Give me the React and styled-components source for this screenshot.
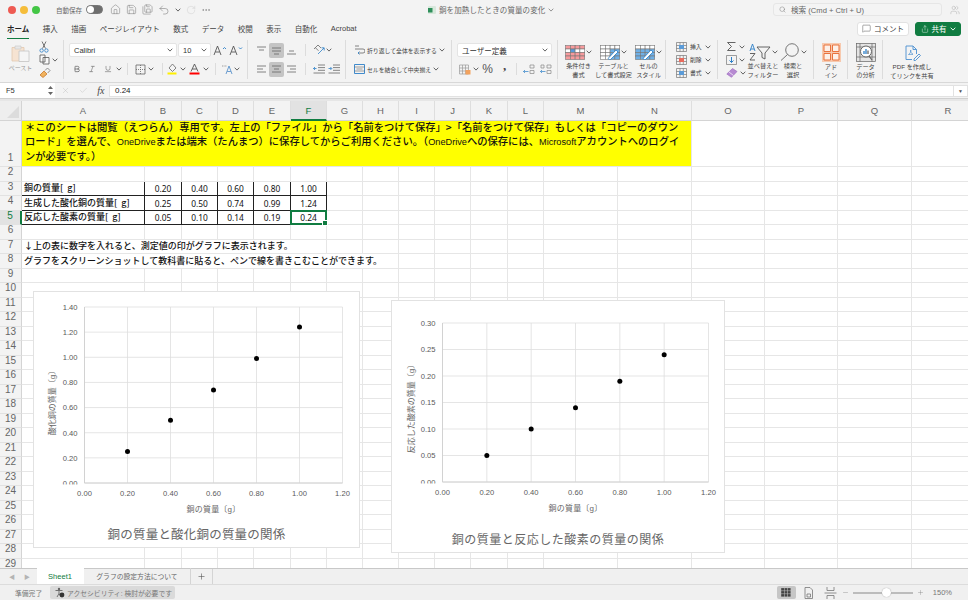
import React from 'react'
import styled, { createGlobalStyle } from 'styled-components'
import { Home, Save, SaveAll, Undo2, RotateCw, MoreHorizontal, Search, X, Check, Plus, Minus, Users, MessageSquare, Share, Bold, Italic, Underline } from 'lucide-react'

const Global = createGlobalStyle`
	html, body { margin: 0; padding: 0; background: #f3f3f3; }
	* { box-sizing: border-box; }
	body { font-family: "Liberation Sans", "Noto Sans CJK JP", sans-serif; color: #444; overflow: hidden; }
`

const Window = styled.div`
	width: 968px;
	height: 600px;
	display: flex;
	flex-direction: column;
	overflow: hidden;
	background: #f3f3f3;
`

/* title bar */
const TitleBar = styled.header`
	height: 19px;
	flex: none;
	display: flex;
	align-items: center;
`
const Lights = styled.div`
	display: flex;
	gap: 4px;
	padding-left: 8px;
	width: 56px;
`
const Light = styled.span`
	width: 8px;
	height: 8px;
	border-radius: 50%;
	background: ${(p) => p.$c};
`
const AutoSave = styled.span`
	font-size: 6.5px;
	color: #666;
	width: 30px;
	white-space: nowrap;
`
const Toggle = styled.span`
	width: 17px;
	height: 9px;
	border-radius: 5px;
	background: #6e6e6e;
	border: 1px solid #777;
	display: block;
	&::before {
		content: '';
		display: block;
		width: 7px;
		height: 7px;
		border-radius: 50%;
		background: #fff;
	}
`
const QuickTools = styled.div`
	display: flex;
	align-items: center;
	gap: 5px;
	padding-left: 7px;
	color: #777;
	width: 325px;
`
const DocTitle = styled.div`
	display: flex;
	align-items: center;
	gap: 3px;
	font-size: 7.5px;
	color: #666;
	width: 345px;
	white-space: nowrap;
	letter-spacing: 0.1px;
`
const SearchBox = styled.div`
	width: 169px;
	height: 13px;
	border: 1px solid #e6e6e6;
	border-radius: 3px;
	display: flex;
	align-items: center;
	gap: 5px;
	padding-left: 5px;
	font-size: 7.6px;
	color: #666;
	background: #f4f4f4;
`
const PeopleSlot = styled.div`
	margin-left: 8px;
	color: #aaa;
	display: flex;
`

/* tab row */
const TabBar = styled.nav`
	height: 19px;
	flex: none;
	display: flex;
	align-items: center;
	padding-left: 7px;
	gap: 13.5px;
	font-size: 7.5px;
	word-spacing: -2px;
	position: relative;
`
const Tab = styled.span`
	position: relative;
	color: ${(p) => (p.$active ? '#222' : '#444')};
	font-weight: ${(p) => (p.$active ? 700 : 400)};
	white-space: nowrap;
	&::after {
		content: '';
		display: ${(p) => (p.$active ? 'block' : 'none')};
		position: absolute;
		left: 0;
		right: 0;
		bottom: -5px;
		height: 1.5px;
		background: #107c41;
	}
`
const TabActions = styled.div`
	margin-left: auto;
	display: flex;
	gap: 6px;
	padding-right: 7px;
`
const CommentButton = styled.button`
	width: 52px;
	height: 14px;
	border: 1px solid #e2e2e2;
	border-radius: 3px;
	background: #fff;
	font: inherit;
	font-size: 7.5px;
	color: #444;
	padding: 0;
	display: flex;
	align-items: center;
	justify-content: center;
	gap: 3px;
`
const ShareButton = styled(CommentButton)`
	width: 46px;
	background: #107c41;
	border-color: #107c41;
	color: #fff;
`

/* ribbon */
const Ribbon = styled.section`
	height: 45px;
	flex: none;
	display: flex;
	border-bottom: 1px solid #d8d8d8;
	padding-top: 2px;
	padding-bottom: 2px;
`
const Group = styled.div`
	width: ${(p) => p.$w}px;
	flex: none;
	display: flex;
	flex-direction: ${(p) => (p.$row ? 'row' : 'column')};
	justify-content: ${(p) => (p.$row ? 'flex-start' : 'space-between')};
	padding-top: ${(p) => (p.$row || p.$tight ? 0 : 3)}px;
	padding-bottom: ${(p) => (p.$row || p.$tight ? 0 : 3)}px;
	padding-left: ${(p) => p.$pad || 0}px;
	border-right: ${(p) => (p.$last ? 'none' : '1px solid #dcdcdc')};
	margin-bottom: ${(p) => (p.$last ? 0 : 1)}px;
`
const ToolRow = styled.div`
	display: flex;
	align-items: center;
	height: 14px;
	gap: ${(p) => p.$gap || 0}px;
`
const Tool = styled.span`
	width: ${(p) => p.$w || 15}px;
	height: 15px;
	flex: none;
	display: flex;
	align-items: center;
	justify-content: center;
	color: #555;
	border-radius: 2px;
	background: ${(p) => (p.$on ? '#c4c4c4' : 'transparent')};
`
const VLine = styled.span`
	width: 1px;
	height: 12px;
	background: #dcdcdc;
	flex: none;
	margin-left: ${(p) => p.$l}px;
	margin-right: ${(p) => p.$r}px;
`
const Field = styled.div`
	width: ${(p) => p.$w}px;
	height: 14px;
	flex: none;
	background: #fff;
	border: 1px solid #e4e4e4;
	border-radius: 2px;
	display: flex;
	align-items: center;
	justify-content: space-between;
	padding: 0 3px 0 4px;
	font-size: 7.5px;
	color: #333;
	margin-right: ${(p) => p.$mr || 0}px;
`
const SmallLabel = styled.span`
	font-size: 5.85px;
	color: #444;
	white-space: nowrap;
	margin: 0 ${(p) => p.$m || 2}px;
`
const BigTool = styled.div`
	width: ${(p) => p.$w}px;
	flex: none;
	display: flex;
	flex-direction: column;
	align-items: center;
`
const BigIcon = styled.div`
	height: 23px;
	display: flex;
	align-items: center;
	gap: 1px;
	padding-top: 3px;
`
const BigText = styled.div`
	font-size: 6.2px;
	line-height: 8.5px;
	text-align: center;
	white-space: nowrap;
	color: #444;
	padding-top: 0.5px;
`
const PasteLabel = styled.div`
	font-size: 6px;
	color: #999;
	text-align: center;
	width: 24px;
`

/* formula bar */
const FormulaBar = styled.div`
	height: 16px;
	flex: none;
	display: flex;
	align-items: center;
	background: #f3f3f3;
	border-bottom: 1px solid #d0d0d0;
`
const NameBox = styled.div`
	width: 55px;
	height: 15px;
	background: #fff;
	font-size: 7.5px;
	color: #333;
	display: flex;
	align-items: center;
	justify-content: space-between;
	padding: 0 2px 0 6px;
`
const FormulaTools = styled.div`
	width: 54px;
	display: flex;
	align-items: center;
	justify-content: space-around;
	color: #bbb;
	padding-left: 2px;
`
const Fx = styled.i`
	font-family: "Liberation Serif", serif;
	font-size: 10px;
	color: #444;
`
const FormulaInput = styled.div`
	flex: 1;
	height: 12px;
	background: #fff;
	border: 1px solid #e2e2e2;
	font-size: 8px;
	color: #222;
	display: flex;
	align-items: center;
	padding-left: 5px;
`
const FormulaDrop = styled.span`
	margin-left: auto;
	width: 14px;
	height: 100%;
	border-left: 1px solid #e2e2e2;
	display: flex;
	align-items: center;
	justify-content: center;
	font-size: 5px;
	color: #555;
`

/* sheet */
const SheetArea = styled.div`
	flex: 1;
	position: relative;
	overflow: hidden;
	background: #fff;
	border-top: 2px solid #e6e6e6;
`
const SheetGrid = styled.div`
	display: grid;
	grid-template-columns: 22px 123px 37px 36px 36px 37px 36px 36px 36px 36px 36px 37px 36px 74px 74px 73px 73px 74px 73px;
	grid-template-rows: 20px 46px repeat(28, 14.5px);
`
const Corner = styled.div`
	background: #eeeeee;
	border-right: 1px solid #d4d4d4;
	border-bottom: 1px solid #d4d4d4;
	position: relative;
	&::after {
		content: '';
		position: absolute;
		right: 2px;
		bottom: 2px;
		border-style: solid;
		border-width: 0 0 12px 12px;
		border-color: transparent transparent #dcdcdc transparent;
	}
`
const ColHead = styled.div`
	background: ${(p) => (p.$on ? '#e2e2e2' : '#f3f3f3')};
	border-right: 1px solid #dedede;
	border-bottom: ${(p) => (p.$on ? '2px solid #107c41' : '1px solid #d4d4d4')};
	color: ${(p) => (p.$on ? '#107c41' : '#666')};
	font-size: 9.5px;
	display: flex;
	align-items: center;
	justify-content: center;
`
const RowHead = styled.div`
	background: ${(p) => (p.$on ? '#e2e2e2' : '#f3f3f3')};
	border-right: ${(p) => (p.$on ? '2px solid #107c41' : '1px solid #d4d4d4')};
	border-bottom: 1px solid #e2e2e2;
	color: ${(p) => (p.$on ? '#107c41' : '#666')};
	font-size: 10px;
	line-height: 10px;
	display: flex;
	align-items: ${(p) => (p.$bottom ? 'flex-end' : 'flex-start')};
	padding-bottom: ${(p) => (p.$bottom ? 3 : 0)}px;
	justify-content: center;
	overflow: hidden;
`
const Cell = styled.div`
	grid-column: span ${(p) => p.$span || 1};
	background: ${(p) => p.$bg || 'transparent'};
	border-right: 1px solid ${(p) => (p.$line ? '#222' : '#e6e6e6')};
	border-bottom: 1px solid ${(p) => (p.$line ? '#222' : '#e6e6e6')};
	font-family: "Noto Sans CJK JP", sans-serif;
	font-size: 9px;
	font-weight: 500;
	line-height: 12px;
	color: #111;
	white-space: pre;
	overflow: hidden;
	padding-left: 2px;
	padding-bottom: 1px;
	display: flex;
	align-items: flex-end;
`
const NumCell = styled(Cell)`
	font-family: "Noto Sans", sans-serif;
	font-size: 8.4px;
	font-weight: 400;
	line-height: 13px;
	justify-content: center;
	padding-left: 0;
	padding-bottom: 0;
	position: relative;
	overflow: visible;
`
const Notice = styled(Cell)`
	font-size: 10.3px;
	line-height: 14.3px;
	padding: 0 0 1px 3px;
	border-color: #e6e6e6;
	align-items: flex-start;
	color: #111;
	white-space: nowrap;
	overflow: visible;
	& > span {
		margin-top: -1.5px;
	}
`
const Latin = styled.span`
	font-family: "Liberation Sans", sans-serif;
	font-size: 9.2px;
`
const Selection = styled.span`
	position: absolute;
	inset: -1px -1px -1px -1px;
	border: 2px solid #107c41;
	pointer-events: none;
	&::after {
		content: '';
		position: absolute;
		right: -3px;
		bottom: -3px;
		width: 4px;
		height: 4px;
		background: #107c41;
		border: 1px solid #fff;
	}
`
const ChartFrame = styled.figure`
	position: absolute;
	margin: 0;
	left: ${(p) => p.$x}px;
	top: ${(p) => p.$y}px;
	width: ${(p) => p.$w}px;
	height: ${(p) => p.$h}px;
	background: #fff;
	border: 1px solid #e2e2e2;
	svg { display: block; }
`

/* sheet tabs */
const SheetTabs = styled.div`
	height: 16px;
	flex: none;
	display: flex;
	align-items: stretch;
	background: #f0f0f0;
	border-top: 1px solid #c8c8c8;
	font-size: 7.5px;
	color: #666;
	position: relative;
`
const TabArrows = styled.div`
	width: 37px;
	display: flex;
	align-items: center;
	gap: 9px;
	padding-left: 9px;
	color: #b4b4b4;
	font-size: 6px;
`
const SheetTab = styled.div`
	width: ${(p) => p.$w}px;
	display: flex;
	align-items: center;
	justify-content: center;
	background: ${(p) => (p.$on ? '#fff' : 'transparent')};
	color: ${(p) => (p.$on ? '#107c41' : '#666')};
	font-size: ${(p) => p.$size || 7.5}px;
	border-right: 1px solid ${(p) => (p.$on ? 'transparent' : '#d4d4d4')};
	white-space: nowrap;
	margin-top: -1px;
`
const AddTab = styled.div`
	width: 22px;
	display: flex;
	align-items: center;
	justify-content: center;
	border-right: 1px solid #d4d4d4;
	color: #555;
`

/* status bar */
const StatusBar = styled.footer`
	height: 16px;
	flex: none;
	display: flex;
	align-items: center;
	background: #f0f0f0;
	border-top: 1px solid #dcdcdc;
	font-size: 6.8px;
	color: #777;
`
const Ready = styled.span`
	padding-left: 15px;
	width: 50px;
	white-space: nowrap;
`
const A11y = styled.span`
	width: 125px;
	height: 13px;
	background: #dadada;
	border-radius: 2px;
	display: flex;
	align-items: center;
	gap: 2px;
	padding-left: 5px;
	white-space: nowrap;
`
const ViewTools = styled.div`
	margin-left: auto;
	display: flex;
	align-items: center;
	color: #777;
	padding-right: 16px;
`
const ViewButton = styled.span`
	width: 19px;
	height: 13px;
	margin-right: ${(p) => p.$mr || 0}px;
	background: ${(p) => (p.$on ? '#c6c6c6' : 'transparent')};
	border-radius: 2px;
	display: flex;
	align-items: center;
	justify-content: center;
`
const Slider = styled.span`
	width: 60px;
	height: 2px;
	background: #bcbcbc;
	margin: 0 4px;
	position: relative;
	&::after {
		content: '';
		position: absolute;
		left: 29px;
		top: -4px;
		width: 9px;
		height: 9px;
		border-radius: 50%;
		background: #fff;
		box-shadow: 0 0 1px #888;
	}
`
const Zoom = styled.span`
	font-size: 7.5px;
	margin-left: 9px;
`

const Chev = ({ c = '#555' }) => (
	<svg width="6" height="4" viewBox="0 0 6 4" fill="none" stroke={c} strokeWidth="0.9">
		<path d="M0.7 0.7 3 3.1 5.3 0.7" />
	</svg>
)

const Glyph = ({ w = 12, h = 12, children, stroke = '#555' }) => (
	<svg width={w} height={h} viewBox={`0 0 ${w} ${h}`} fill="none" stroke={stroke} strokeWidth="0.8">
		{children}
	</svg>
)

const Lines = ({ rows }) => (
	<Glyph w={11} h={11} stroke="#666">
		{rows.map(([y, x1, x2]) => (
			<path key={y} d={`M${x1} ${y}H${x2}`} />
		))}
	</Glyph>
)

const PasteIcon = () => (
	<svg width="19" height="17" viewBox="0 0 19 17" fill="none">
		<path d="M1 2.5h12v13.5H1z" fill="#f6e3d2" stroke="#e2c8ae" strokeWidth="0.8" />
		<path d="M4 1h6v3H4z" fill="#e8e8e8" stroke="#ccc" strokeWidth="0.7" />
		<path d="M8 6h10v10.5H8z" fill="#f5f5f5" stroke="#c4c4c4" strokeWidth="0.8" />
	</svg>
)
const CutIcon = () => (
	<Glyph w={10} h={12}>
		<path d="M3 0.5 6.5 7.5M7 0.5 3.5 7.5" />
		<circle cx="2.6" cy="9.5" r="1.7" stroke="#2c7fc7" />
		<circle cx="7.4" cy="9.5" r="1.7" stroke="#2c7fc7" />
	</Glyph>
)
const CopyIcon = () => (
	<Glyph w={11} h={11}>
		<path d="M1 1h5v7H1zM4 3.5h6V10H4z" fill="#fafafa" />
	</Glyph>
)
const BrushIcon = () => (
	<Glyph w={12} h={11} stroke="#c87a2e">
		<path d="M1 8 5 4l3 3-4 3.5z" fill="#f1b35f" />
		<path d="M6 3.5 8.5 1 11 3.5 8.7 6" stroke="#777" />
	</Glyph>
)
const FontGrow = ({ down }) => (
	<svg width="14" height="11" viewBox="0 0 14 11" fill="none" stroke="#555" strokeWidth="0.9">
		<path d="M1 10 4.5 1 8 10M2.4 7h4.2" />
		<path d={down ? 'M10 2.5l1.5 1.5L13 2.5' : 'M10 4l1.5-1.5L13 4'} stroke="#2c7fc7" />
	</svg>
)
const BorderIcon = () => (
	<Glyph w={11} h={11} stroke="#666">
		<path d="M1 1h9v9H1z" />
		<path d="M5.5 1v9M1 5.5h9" strokeDasharray="1 1" />
	</Glyph>
)
const FillIcon = () => (
	<svg width="11" height="12" viewBox="0 0 11 12" fill="none" stroke="#666" strokeWidth="0.8">
		<path d="M5.5 1 9 5 5.5 8.5 2 5z" />
		<path d="M0.5 9.5h9v2h-9z" fill="#ffef00" stroke="none" />
	</svg>
)
const ColorIcon = () => (
	<svg width="11" height="12" viewBox="0 0 11 12" fill="none" stroke="#555" strokeWidth="0.9">
		<path d="M2 8.5 5.5 1 9 8.5M3.2 6h4.6" />
		<path d="M0.5 9.5h10v2H0.5z" fill="#ff0000" stroke="none" />
	</svg>
)
const AbcIcon = () => (
	<svg width="12" height="12" viewBox="0 0 12 12" fill="none" stroke="#888" strokeWidth="0.8">
		<path d="M1 3h5" strokeDasharray="1 0.6" />
		<path d="M5 11 8 3l3 8M6.2 8.5h3.6" stroke="#4a88c7" />
	</svg>
)
const OrientIcon = () => (
	<svg width="12" height="12" viewBox="0 0 12 12" fill="none" stroke="#666" strokeWidth="0.8">
		<path d="M1 5 5 1l3 3M2.5 3.8l3 3" />
		<path d="M5 10 11 4M8.5 3.8H11.2V6.5" stroke="#2c7fc7" />
	</svg>
)
const IndentIcon = ({ flip }) => (
	<svg width="12" height="10" viewBox="0 0 12 10" fill="none" stroke="#666" strokeWidth="0.8">
		<path d="M5 1h7M5 3.6h7M5 6.3h7M0.5 9h11.5" />
		<path d={flip ? 'M0.5 4.5h3M2.4 3l1.4 1.5L2.4 6' : 'M0.5 4.5h3M2 3 .5 4.5 2 6'} stroke="#2c7fc7" />
	</svg>
)
const WrapIcon = () => (
	<svg width="11" height="12" viewBox="0 0 11 12" fill="none" stroke="#666" strokeWidth="0.8">
		<path d="M1 2h4M1 5h8a2 2 0 0 1 0 4H4" />
		<path d="M5.5 7.5 4 9l1.5 1.5" stroke="#2c7fc7" />
	</svg>
)
const MergeIcon = () => (
	<svg width="11" height="10" viewBox="0 0 11 10" fill="none" stroke="#2c7fc7" strokeWidth="0.9">
		<path d="M.5.5h10v9H.5z" />
		<path d="M2.5 5h6M.5 3h10M.5 7h10" stroke="#666" strokeWidth="0.6" />
	</svg>
)
const NumFormatIcon = () => (
	<svg width="12" height="11" viewBox="0 0 12 11" fill="none" stroke="#999" strokeWidth="0.7">
		<path d="M.5 1h9v9h-9zM.5 4h9M.5 7h9M3.5 1v9M6.5 1v9" />
		<path d="M6.5 6h5v4.5h-5z" fill="#f2a25e" stroke="none" />
	</svg>
)
const Percent = styled.span`
	font-size: 12px;
	color: #555;
	font-weight: 300;
`
const Comma = styled.span`
	display: block;
	font-family: "Liberation Serif", serif;
	font-size: 13px;
	font-weight: 700;
	line-height: 8px;
	margin-top: -6px;
	color: #444;
`
const DecimalIcon = ({ flip }) => (
	<svg width="12" height="11" viewBox="0 0 12 11" fill="none" stroke="#888" strokeWidth="0.7">
		<path d={flip ? 'M7 1h4v3H7zM7 6.5h4v3H7z' : 'M1 1h3v3H1zM7 1h4v3H7zM7 6.5h4v3H7z'} />
		<path d="M0.5 7.5h5M2 6l-1.5 1.5L2 9" stroke="#2c7fc7" />
	</svg>
)
const GridIcon = ({ mode }) => {
	const cells = [0, 1, 2, 3].flatMap((r) => [0, 1, 2, 3].map((c) => [r, c]))
	return (
		<svg width="20" height="15" viewBox="0 0 20 15">
			{cells.map(([r, c]) => {
				let fill = '#fff'
				if (mode === 'cond') fill = (c < 2 && r !== 1) || (r === 0) || r === 3 ? '#f79a9c' : c === 1 ? '#5a9bd8' : '#fff'
				if (mode === 'cond' && r === 2 && c > 1) fill = '#f79a9c'
				if (mode === 'table') fill = r === 0 ? '#fff' : c > 1 ? '#6fb0e6' : '#fff'
				if (mode === 'style') fill = r === 0 ? '#fff' : '#6fb0e6'
				return <rect key={`${r}-${c}`} x={c * 4.8 + 0.5} y={r * 3.5 + 0.5} width="4.8" height="3.5" fill={fill} stroke="#777" strokeWidth="0.6" />
			})}
			{mode !== 'cond' && <path d="M8 13.5 16 5l2 2-8 8z" fill="#fff" stroke="#2c7fc7" strokeWidth="0.8" />}
		</svg>
	)
}
const CellOpIcon = ({ c }) => (
	<svg width="11" height="10" viewBox="0 0 11 10" fill="none" stroke="#777" strokeWidth="0.7">
		<path d="M.5.5h10v9H.5zM.5 3.5h10M.5 6.5h10M4 .5v9M7.3.5v9" />
		<rect x="3" y="3" width="5" height="4" fill={c} stroke="none" />
	</svg>
)
const SigmaIcon = () => (
	<svg width="11" height="11" viewBox="0 0 11 11" fill="none" stroke="#555" strokeWidth="0.9">
		<path d="M9.5 1.5h-8l4 4-4 4h8" />
	</svg>
)
const FillDownIcon = () => (
	<svg width="11" height="10" viewBox="0 0 11 10" fill="none" stroke="#777" strokeWidth="0.7">
		<path d="M.5.5h10v9H.5z" />
		<path d="M5.5 2v5.5M3.5 5.5l2 2 2-2" stroke="#2c7fc7" strokeWidth="1" />
	</svg>
)
const ClearIcon = () => (
	<svg width="12" height="10" viewBox="0 0 12 10">
		<path d="M.8 6 6.5.5 11 3.5 5.5 9.3z" fill="#b78ad2" stroke="#9a64bd" strokeWidth="0.6" />
		<path d="M3 4 7.5 7.5" stroke="#fff" strokeWidth="0.7" />
	</svg>
)
const SortIcon = () => (
	<svg width="22" height="18" viewBox="0 0 22 18" fill="none" stroke="#555" strokeWidth="0.9">
		<path d="M1 8 3.5 1 6 8M1.8 6h3.4" stroke="#2c7fc7" />
		<path d="M1 10.5h5L1 17h5" />
		<path d="M8 4h13l-5 6v6l-3-1.5V10z" />
	</svg>
)
const FindIcon = () => (
	<svg width="20" height="18" viewBox="0 0 20 18" fill="none" stroke="#666" strokeWidth="0.9">
		<circle cx="12" cy="7" r="6.3" />
		<path d="M7.5 11.5 1 17.5" />
	</svg>
)
const AddinIcon = () => (
	<svg width="19" height="19" viewBox="0 0 19 19">
		<rect width="19" height="19" fill="#f7c9ae" />
		<path d="M2 2h6.5v6.5H2zM10.5 2H17v6.5h-6.5zM2 10.5h6.5V17H2zM10.5 10.5H17V17h-6.5z" fill="#fdf0e8" stroke="#e9723d" strokeWidth="1" />
	</svg>
)
const AnalysisIcon = () => (
	<svg width="20" height="19" viewBox="0 0 20 19" fill="none" stroke="#666" strokeWidth="0.7">
		<rect x="0.5" y="0.5" width="19" height="18" fill="#e4e4e4" />
		<path d="M0.5 4h19M0.5 14h19M4 0.5v18M16 0.5v18" />
		<circle cx="10" cy="8.5" r="5.5" fill="#fff" strokeWidth="1" />
		<path d="M8 11V8" stroke="#2c7fc7" strokeWidth="1.3" />
		<path d="M10 11V6" stroke="#2c7fc7" strokeWidth="1.3" />
		<path d="M12 11V7.5" stroke="#666" strokeWidth="1.3" />
		<path d="M13 13l3 4" strokeWidth="1.2" />
	</svg>
)
const PdfIcon = () => (
	<svg width="17" height="16" viewBox="0 0 17 16" fill="none" stroke="#4a8fd0" strokeWidth="0.9">
		<path d="M2 1h7l3.5 3.5V9M2 1v13.5h6" />
		<path d="M9 1v3.5h3.5" />
		<path d="M4.5 9.5c2-1 2.5-3.5 2.2-4.5-.4 1.3.6 3.5 2.3 4.3-1.2 0-3 .2-4.5.2z" strokeWidth="0.7" />
		<path d="M10 14l5-5 1.5 1.5-5 5H10z" />
	</svg>
)
const A11yIcon = () => (
	<svg width="10" height="11" viewBox="0 0 10 11">
		<circle cx="4" cy="2" r="1.2" fill="#666" />
		<path d="M.5 3.5h7M4 3.5v3L2 10M4 6.5 6 10" stroke="#666" strokeWidth="0.9" fill="none" />
		<circle cx="7" cy="8" r="2.4" fill="#333" />
	</svg>
)
const PageIcon = () => (
	<svg width="11" height="12" viewBox="0 0 11 12" fill="none" stroke="#777" strokeWidth="0.8">
		<path d="M2 .5h5L9.5 3v8.5H2zM4 7h3.5v3H4z" />
	</svg>
)
const BreakIcon = () => (
	<svg width="13" height="12" viewBox="0 0 13 12" fill="none" stroke="#777" strokeWidth="0.8">
		<path d="M3 0v3.500h7V0M3 12V8.500h7V12M.5 6h12" />
	</svg>
)
const SheetGridIcon = () => (
	<svg width="10" height="9" viewBox="0 0 10 9" fill="#444">
		{[0, 1, 2].flatMap((r) =>
			[0, 1, 2].map((c) => <rect key={`${r}${c}`} x={c * 3.3 + 0.2} y={r * 3 + 0.1} width="2.8" height="2.5" />)
		)}
	</svg>
)

const AXIS_FONT = '"Liberation Sans", "Noto Sans CJK JP", sans-serif'

// one scatter chart: frame is its box in sheet pixels, plot is the inner area
const ScatterChart = ({ id, frame, plot, yTicks, yMax, points, yLabel, yLabelY, title, titleSize, titleY, titleSpacing, yLabelX, xTitleY, tickRight }) => {
	const toX = (v) => plot.x + (v / 1.2) * plot.w
	const toY = (v) => plot.y + plot.h - (v / yMax) * plot.h
	const xTicks = [0, 0.2, 0.4, 0.6, 0.8, 1, 1.2]
	return (
		<ChartFrame $x={frame.x} $y={frame.y} $w={frame.w} $h={frame.h}>
			<svg width={frame.w - 2} height={frame.h - 2} fontFamily={AXIS_FONT}>
				<defs>
					<clipPath id={id}>
						<rect x="0" y="0" width={plot.x} height={plot.y + plot.h + 1.5} />
					</clipPath>
				</defs>
				{xTicks.map((t) => (
					<line key={t} x1={toX(t)} x2={toX(t)} y1={plot.y} y2={plot.y + plot.h} stroke="#dedede" strokeWidth="0.8" />
				))}
				{yTicks.map((t) => (
					<line key={t} x1={plot.x} x2={plot.x + plot.w} y1={toY(t)} y2={toY(t)} stroke="#dedede" strokeWidth="0.8" />
				))}
				<line x1={plot.x} x2={plot.x + plot.w} y1={plot.y + plot.h} y2={plot.y + plot.h} stroke="#cfcfcf" strokeWidth="0.9" />
				<line x1={plot.x} x2={plot.x} y1={plot.y} y2={plot.y + plot.h} stroke="#cfcfcf" strokeWidth="0.9" />
				{yTicks.map((t) => (
					<text key={t} x={tickRight} y={toY(t) + 2.8} textAnchor="end" fontSize="7.6" fill="#595959" clipPath={t === 0 ? `url(#${id})` : undefined}>
						{t.toFixed(2)}
					</text>
				))}
				{xTicks.map((t) => (
					<text key={t} x={toX(t)} y={plot.y + plot.h + 13} textAnchor="middle" fontSize="7.6" fill="#595959">
						{t.toFixed(2)}
					</text>
				))}
				<text x={plot.x + plot.w / 2} y={xTitleY} textAnchor="middle" fontSize="8" fill="#666" letterSpacing="0.2">
					銅の質量〔g〕
				</text>
				<text transform={`translate(${yLabelX} ${yLabelY}) rotate(-90)`} textAnchor="middle" fontSize="8" fill="#666">
					{yLabel}
				</text>
				<text x={(frame.w - 2) / 2} y={titleY} textAnchor="middle" fontSize={titleSize} fill="#666" letterSpacing={titleSpacing}>
					{title}
				</text>
				{points.map(([px, py]) => (
					<circle key={px} cx={toX(px)} cy={toY(py)} r="2.5" fill="#000" />
				))}
			</svg>
		</ChartFrame>
	)
}

const COLS = 'A B C D E F G H I J K L M N O P Q R'.split(' ')
const TAB_NAMES = ['挿入', '描画', 'ページ レイアウト', '数式', 'データ', '校閲', '表示', '自動化', 'Acrobat']
const TABLE = {
	3: ['銅の質量[  g]', '0.20', '0.40', '0.60', '0.80', '1.00'],
	4: ['生成した酸化銅の質量[  g]', '0.25', '0.50', '0.74', '0.99', '1.24'],
	5: ['反応した酸素の質量[  g]', '0.05', '0.10', '0.14', '0.19', '0.24'],
}
const FREE_TEXT = {
	7: { text: '↓上の表に数字を入れると、測定値の印がグラフに表示されます。', span: 6 },
	8: { text: 'グラフをスクリーンショットして教科書に貼ると、ペンで線を書きこむことができます。', span: 8 },
}

const blanks = (row, from) =>
	COLS.slice(from).map((c) => <Cell key={`${c}${row}`} />)

const renderRow = (row) => {
	if (TABLE[row]) {
		const [label, ...nums] = TABLE[row]
		return (
			<React.Fragment key={row}>
				<RowHead $on={row === 5}>{row}</RowHead>
				<Cell $line>{label}</Cell>
				{nums.map((n, i) => (
					<NumCell key={i} $line>
						{n}
						{row === 5 && i === 4 && <Selection />}
					</NumCell>
				))}
				{blanks(row, 6)}
			</React.Fragment>
		)
	}
	const free = FREE_TEXT[row]
	return (
		<React.Fragment key={row}>
			<RowHead>{row}</RowHead>
			{free ? (
				<>
					<Cell $span={free.span}>{free.text}</Cell>
					{blanks(row, free.span)}
				</>
			) : (
				blanks(row, 0)
			)}
		</React.Fragment>
	)
}

const rows = Array.from({ length: 28 }, (_, i) => i + 2)

export default function App() {
	return (
		<Window>
			<Global />
			<TitleBar>
				<Lights>
					<Light $c="#ee5a52" />
					<Light $c="#f5bd3a" />
					<Light $c="#43c645" />
				</Lights>
				<AutoSave>自動保存</AutoSave>
				<Toggle />
				<QuickTools>
					<Home size={11} strokeWidth={1.1} />
					<Save size={11} strokeWidth={1.1} />
					<SaveAll size={11} strokeWidth={1.1} />
					<Undo2 size={12} strokeWidth={1.1} />
					<Chev />
					<RotateCw size={10} strokeWidth={1.1} color="#ccc" />
					<MoreHorizontal size={10} strokeWidth={1.4} />
				</QuickTools>
				<DocTitle>
					<svg width="8" height="8" viewBox="0 0 8 8">
						<rect width="8" height="8" rx="1" fill="#d8e8dc" />
						<rect x="0" y="2" width="4.5" height="4.5" fill="#2f8f5b" />
					</svg>
					銅を加熱したときの質量の変化
					<Chev c="#888" />
				</DocTitle>
				<SearchBox>
					<Search size={7} strokeWidth={1.3} />
					検索 (Cmd + Ctrl + U)
				</SearchBox>
				<PeopleSlot>
					<Users size={10} strokeWidth={1.1} />
				</PeopleSlot>
			</TitleBar>

			<TabBar>
				<Tab $active>ホーム</Tab>
				{TAB_NAMES.map((t) => (
					<Tab key={t}>{t}</Tab>
				))}
				<TabActions>
					<CommentButton>
						<MessageSquare size={9} strokeWidth={1.2} />
						コメント
					</CommentButton>
					<ShareButton>
						<Share size={8} strokeWidth={1.3} />
						共有
						<Chev c="#fff" />
					</ShareButton>
				</TabActions>
			</TabBar>

			<Ribbon>
				<Group $w={64} $row $pad={8}>
					<BigTool $w={25}>
						<BigIcon>
							<PasteIcon />
						</BigIcon>
						<PasteLabel>ペースト</PasteLabel>
					</BigTool>
					<Group $w={26} $last $tight $pad={6}>
						<ToolRow><CutIcon /></ToolRow>
						<ToolRow $gap={2}><CopyIcon /><Chev /></ToolRow>
						<ToolRow><BrushIcon /></ToolRow>
					</Group>
				</Group>

				<Group $w={184} $pad={5}>
					<ToolRow>
						<Field $w={108} $mr={1}>Calibri<Chev /></Field>
						<Field $w={33} $mr={1}>10<Chev /></Field>
						<Tool $w={16}><FontGrow /></Tool>
						<Tool $w={16}><FontGrow down /></Tool>
					</ToolRow>
					<ToolRow>
						<Tool><Bold size={8} strokeWidth={2} /></Tool>
						<Tool><Italic size={8} strokeWidth={1.5} /></Tool>
						<Tool $w={17}><Underline size={8} strokeWidth={1.5} /></Tool>
						<Chev />
						<VLine $l={5} $r={5} />
						<Tool><BorderIcon /></Tool>
						<Chev />
						<VLine $l={8} $r={2} />
						<Tool><FillIcon /></Tool>
						<Chev />
						<Tool $w={17}><ColorIcon /></Tool>
						<Chev />
						<VLine $l={6} $r={4} />
						<Tool $w={14}><AbcIcon /></Tool>
						<Chev />
					</ToolRow>
				</Group>

				<Group $w={98} $pad={6}>
					<ToolRow>
						<Tool><Lines rows={[[2, 1, 10], [5, 3, 8]]} /></Tool>
						<Tool $on><Lines rows={[[3, 1, 10], [6, 1, 10], [9, 3, 8]]} /></Tool>
						<Tool><Lines rows={[[6, 3, 8], [9, 1, 10]]} /></Tool>
						<VLine $l={6} $r={5} />
						<Tool><OrientIcon /></Tool>
						<Chev />
					</ToolRow>
					<ToolRow>
						<Tool><Lines rows={[[2, 1, 10], [5, 1, 7], [8, 1, 10]]} /></Tool>
						<Tool $on><Lines rows={[[2, 1, 10], [5, 3, 8], [8, 1, 10]]} /></Tool>
						<Tool><Lines rows={[[2, 1, 10], [5, 4, 10], [8, 1, 10]]} /></Tool>
						<VLine $l={6} $r={5} />
						<Tool><IndentIcon /></Tool>
						<Tool><IndentIcon flip /></Tool>
					</ToolRow>
				</Group>

				<Group $w={106} $pad={8}>
					<ToolRow>
						<WrapIcon />
						<SmallLabel>折り返して全体を表示する</SmallLabel>
						<Chev />
					</ToolRow>
					<ToolRow>
						<MergeIcon />
						<SmallLabel>セルを結合して中央揃え</SmallLabel>
						<Chev />
					</ToolRow>
				</Group>

				<Group $w={106} $pad={5}>
					<ToolRow>
						<Field $w={95}>ユーザー定義<Chev /></Field>
					</ToolRow>
					<ToolRow>
						<Tool $w={2} />
						<NumFormatIcon />
						<Tool $w={9}><Chev /></Tool>
						<Tool><Percent>%</Percent></Tool>
						<Tool $w={19}><Comma>,</Comma></Tool>
						<VLine $l={2} $r={2} />
						<Tool $w={19}><DecimalIcon flip /></Tool>
						<Tool><DecimalIcon /></Tool>
					</ToolRow>
				</Group>

				<Group $w={108} $row $pad={3}>
					<BigTool $w={35}>
						<BigIcon><GridIcon mode="cond" /><Chev /></BigIcon>
						<BigText>条件付き<br />書式</BigText>
					</BigTool>
					<BigTool $w={35}>
						<BigIcon><GridIcon mode="table" /><Chev /></BigIcon>
						<BigText>テーブルと<br />して書式設定</BigText>
					</BigTool>
					<BigTool $w={35}>
						<BigIcon><GridIcon mode="style" /><Chev /></BigIcon>
						<BigText>セルの<br />スタイル</BigText>
					</BigTool>
				</Group>

				<Group $w={52} $tight $pad={10}>
					<ToolRow><CellOpIcon c="#5a9bd8" /><SmallLabel $m={3}>挿入</SmallLabel><Chev /></ToolRow>
					<ToolRow><CellOpIcon c="#e96a5c" /><SmallLabel $m={3}>削除</SmallLabel><Chev /></ToolRow>
					<ToolRow><CellOpIcon c="#5a9bd8" /><SmallLabel $m={3}>書式</SmallLabel><Chev /></ToolRow>
				</Group>

				<Group $w={96} $row $pad={8}>
					<Group $w={23} $last $tight>
						<ToolRow $gap={2}><SigmaIcon /><Chev /></ToolRow>
						<ToolRow $gap={2}><FillDownIcon /><Chev /></ToolRow>
						<ToolRow $gap={2}><ClearIcon /><Chev /></ToolRow>
					</Group>
					<BigTool $w={28}>
						<BigIcon><SortIcon /><Chev /></BigIcon>
						<BigText>並べ替えと<br />フィルター</BigText>
					</BigTool>
					<BigTool $w={32}>
						<BigIcon><FindIcon /><Chev /></BigIcon>
						<BigText>検索と<br />選択</BigText>
					</BigTool>
				</Group>

				<Group $w={34} $row>
					<BigTool $w={34}>
						<BigIcon><AddinIcon /></BigIcon>
						<BigText>アド<br />イン</BigText>
					</BigTool>
				</Group>

				<Group $w={35} $row>
					<BigTool $w={35}>
						<BigIcon><AnalysisIcon /></BigIcon>
						<BigText>データ<br />の分析</BigText>
					</BigTool>
				</Group>

				<Group $w={58} $row $last>
					<BigTool $w={58}>
						<BigIcon><PdfIcon /></BigIcon>
						<BigText>PDF を作成し<br />てリンクを共有</BigText>
					</BigTool>
				</Group>
			</Ribbon>

			<FormulaBar>
				<NameBox>
					F5
					<svg width="5" height="9" viewBox="0 0 5 9" fill="#666">
						<path d="M2.5 0 5 3H0zM2.5 9 0 6h5z" />
					</svg>
				</NameBox>
				<FormulaTools>
					<X size={9} strokeWidth={1.1} />
					<Check size={9} strokeWidth={1.1} />
					<Fx>fx</Fx>
				</FormulaTools>
				<FormulaInput>
					0.24
					<FormulaDrop>▼</FormulaDrop>
				</FormulaInput>
			</FormulaBar>

			<SheetArea>
				<SheetGrid>
					<Corner />
					{COLS.map((c) => (
						<ColHead key={c} $on={c === 'F'}>{c}</ColHead>
					))}
					<RowHead $bottom>1</RowHead>
					<Notice $span={14} $bg="#ffff00">
						<span>
							＊このシートは閲覧（えつらん）専用です。左上の「ファイル」から「名前をつけて保存」&gt;「名前をつけて保存」もしくは「コピーのダウン
							<br />
							ロード」を選んで、<Latin>OneDrive</Latin>または端末（たんまつ）に保存してからご利用ください。（<Latin>OneDrive</Latin>への保存には、<Latin>Microsoft</Latin>アカウントへのログイ
							<br />
							ンが必要です。）
						</span>
					</Notice>
					{blanks(1, 14)}
					{rows.map(renderRow)}
				</SheetGrid>

				<ScatterChart
					id="clip-oxide"
					frame={{ x: 33, y: 190, w: 327, h: 257 }}
					plot={{ x: 50.5, y: 15, w: 258, h: 176 }}
					yTicks={[0, 0.2, 0.4, 0.6, 0.8, 1, 1.2, 1.4]}
					yMax={1.4}
					points={[[0.2, 0.25], [0.4, 0.5], [0.6, 0.74], [0.8, 0.99], [1, 1.24]]}
					yLabel="酸化銅の質量〔g〕"
					yLabelY={109}
					title="銅の質量と酸化銅の質量の関係"
					titleSize={12.5}
					titleSpacing={0.2}
					titleY={247}
					yLabelX={21}
					xTitleY={220}
					tickRight={43.5}
				/>
				<ScatterChart
					id="clip-oxygen"
					frame={{ x: 391, y: 199, w: 334, h: 253 }}
					plot={{ x: 50.5, y: 22, w: 266, h: 159 }}
					yTicks={[0, 0.05, 0.1, 0.15, 0.2, 0.25, 0.3]}
					yMax={0.3}
					points={[[0.2, 0.05], [0.4, 0.1], [0.6, 0.14], [0.8, 0.19], [1, 0.24]]}
					yLabel="反応した酸素の質量〔g〕"
					yLabelY={106}
					title="銅の質量と反応した酸素の質量の関係"
					titleSize={12}
					titleSpacing={0.5}
					titleY={243}
					yLabelX={22}
					xTitleY={210}
					tickRight={43.5}
				/>
			</SheetArea>

			<SheetTabs>
				<TabArrows>
					<span>◀</span>
					<span>▶</span>
				</TabArrows>
				<SheetTab $w={47} $on>Sheet1</SheetTab>
				<SheetTab $w={107} $size={6.8}>グラフの設定方法について</SheetTab>
				<AddTab><Plus size={9} strokeWidth={1.6} /></AddTab>
			</SheetTabs>

			<StatusBar>
				<Ready>準備完了</Ready>
				<A11y>
					<A11yIcon />
					アクセシビリティ: 検討が必要です
				</A11y>
				<ViewTools>
					<ViewButton $on $mr={3}><SheetGridIcon /></ViewButton>
					<ViewButton $mr={3}><PageIcon /></ViewButton>
					<ViewButton $mr={2}><BreakIcon /></ViewButton>
					<Minus size={7} strokeWidth={1.2} />
					<Slider />
					<Plus size={7} strokeWidth={1.2} />
					<Zoom>150%</Zoom>
				</ViewTools>
			</StatusBar>
		</Window>
	)
}
